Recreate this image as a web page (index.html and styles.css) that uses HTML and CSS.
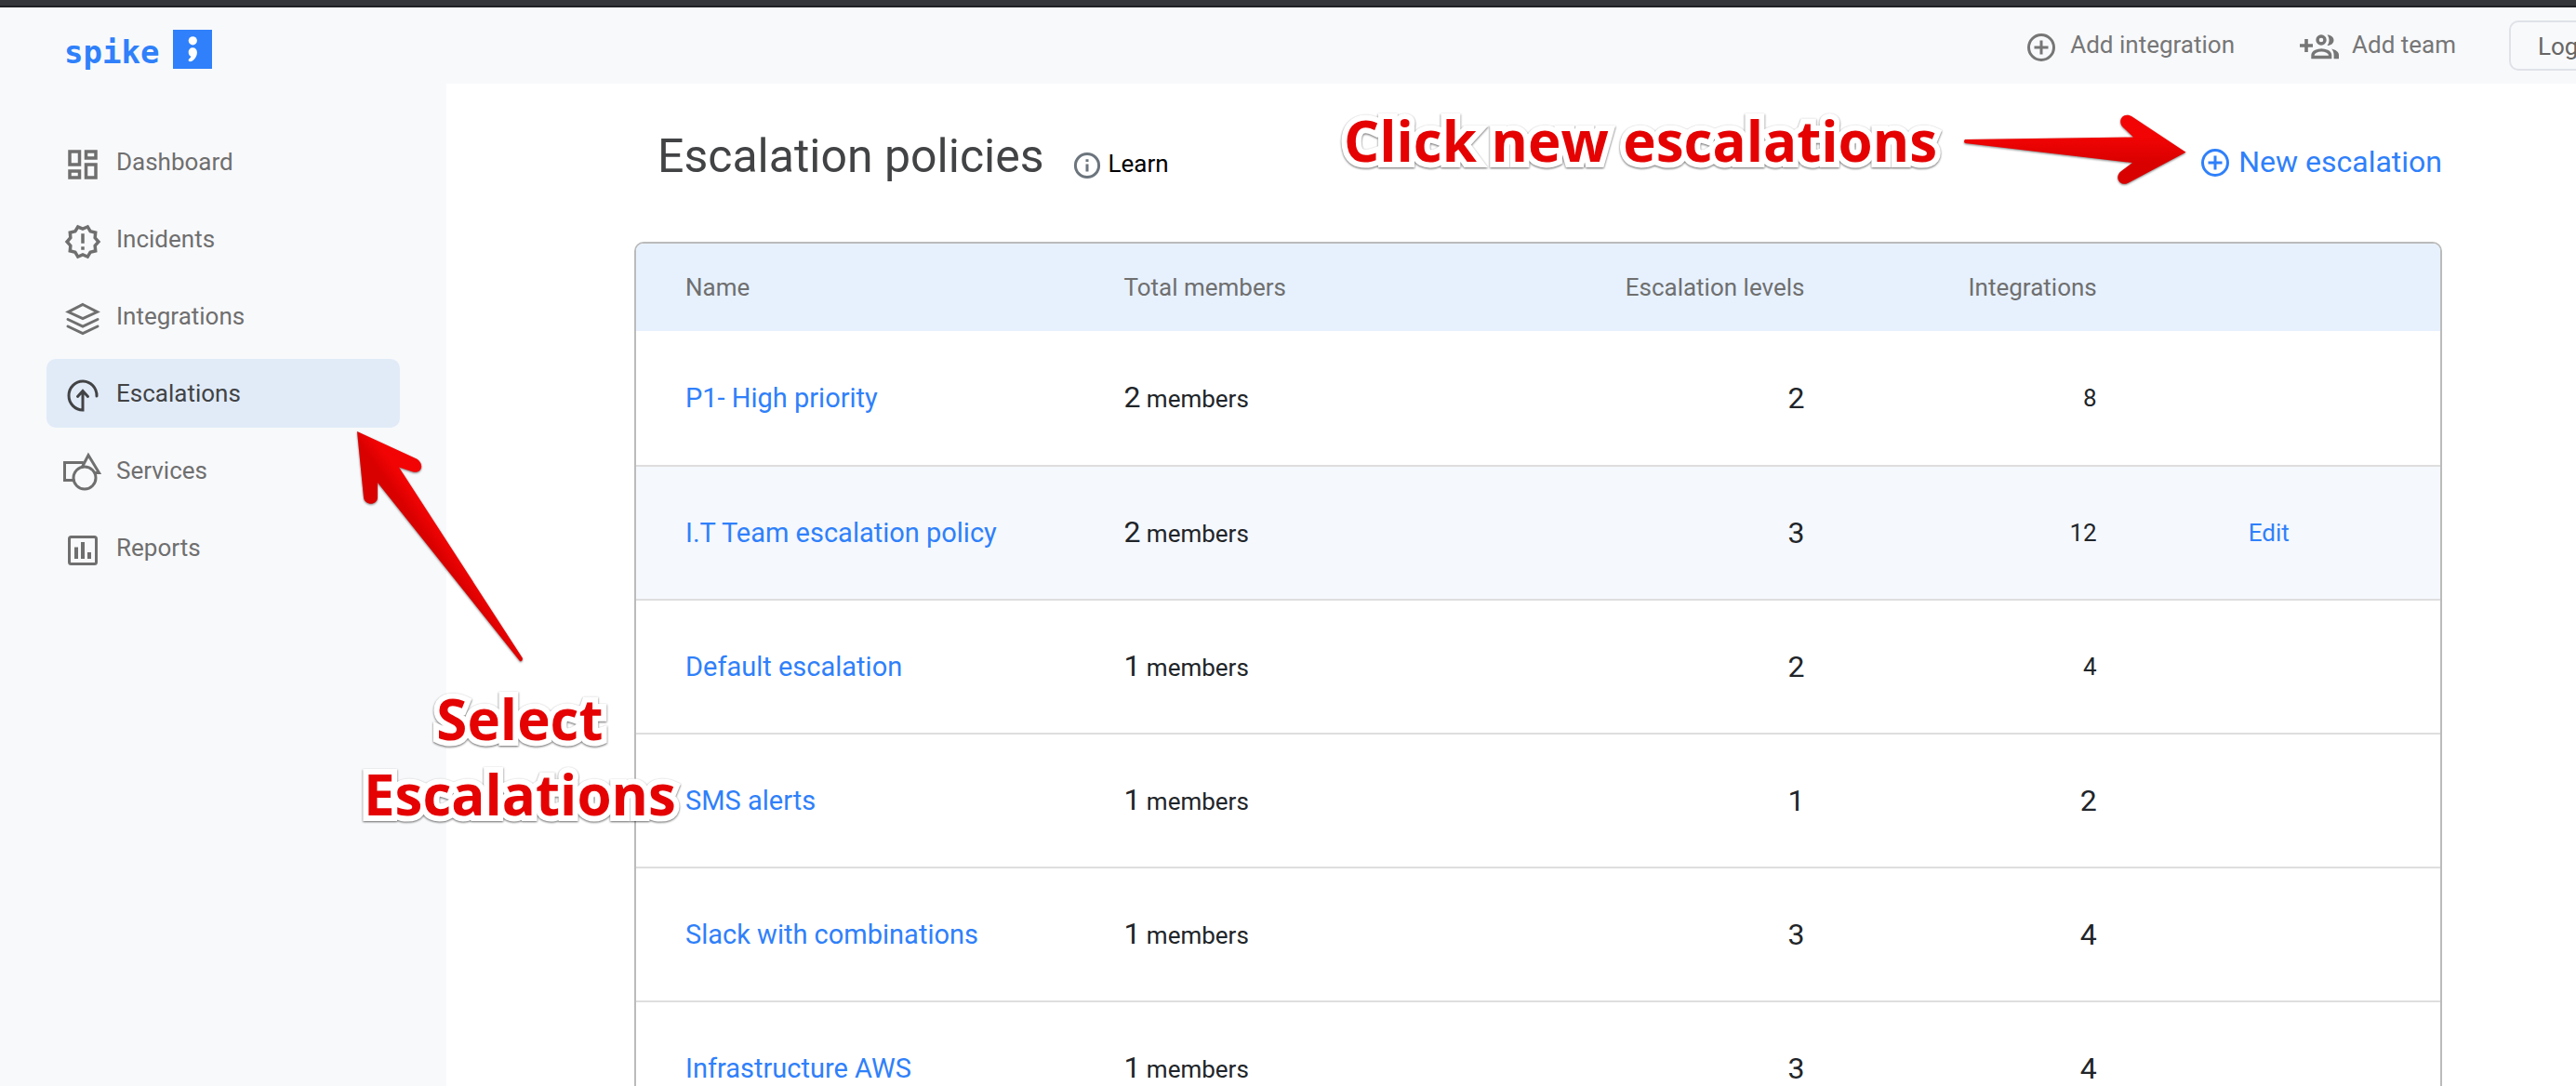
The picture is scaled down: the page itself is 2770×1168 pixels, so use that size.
FILE: index.html
```html
<!DOCTYPE html>
<html lang="en">
<head>
<meta charset="utf-8">
<meta name="viewport" content="width=device-width, initial-scale=1">
<title>Escalation policies</title>
<link rel="stylesheet" href="styles.css">
</head>
<body>
<div class="app">
  <header class="topbar">
    <a class="logo" href="#">
      <span class="logo-text">spike</span>
      <svg class="logo-mark" viewBox="0 0 42 42" aria-hidden="true">
        <rect width="42" height="42" fill="#2f80fa"/>
        <circle cx="21.300" cy="11.800" r="4.600" fill="#fff"/>
        <path d="M21.300 19.200c2.800 0 4.600 2 4.600 5 0 4-2.300 7.500-5.500 9.600-1.600 1-4.600.2-3.600-1.800.6-1.200 2.300-1.800 2.600-3.300-1.800-.7-2.700-2.300-2.700-4.400 0-3 1.800-5.100 4.600-5.100z" fill="#fff"/>
      </svg>
    </a>
    <div class="actions">
      <a class="action" href="#">
        <svg class="icon-circle" viewBox="0 0 30 30" aria-hidden="true"><circle cx="15" cy="15" r="13.500"/><path d="M15 7.500v15M7.500 15h15"/></svg>
        Add integration
      </a>
      <a class="action team" href="#">
        <svg class="icon-team" viewBox="0 0 42 27" aria-hidden="true">
          <path d="M7 5v14M0 12h14" fill="none" stroke="currentColor" stroke-width="3.600"/>
          <circle cx="23" cy="6" r="4" fill="none" stroke="currentColor" stroke-width="3.400"/>
          <path d="M14 24.500v-2.200c0-3.600 5.400-5.400 9.300-5.400s9.300 1.800 9.300 5.400v2.200z" fill="none" stroke="currentColor" stroke-width="3.400"/>
          <path d="M29.500.4c4 0 7 2.500 7 5.800s-3 5.800-7 5.800c1.300-1.600 2-3.600 2-5.800s-.7-4.200-2-5.800zM34 15.600c4.500.8 8 3.400 8 6.500V26.200h-5.400v-4.100c0-2.600-1-4.800-2.600-6.500z" fill="currentColor"/>
        </svg>
        Add team
      </a>
      <button class="log" type="button">Log</button>
    </div>
  </header>
  <div class="body">
    <nav class="sidebar">
      <a class="nav-item" href="#"><svg class="nav-icon" viewBox="0 0 24 24" fill="currentColor" aria-hidden="true"><path d="M19 5v2h-4V5h4M9 5v6H5V5h4m10 8v6h-4v-6h4M9 17v2H5v-2h4M21 3h-8v6h8V3zM11 3H3v10h8V3zm10 8h-8v10h8V11zm-10 4H3v6h8v-6z"/></svg>Dashboard</a>
      <a class="nav-item" href="#"><svg class="nav-icon" viewBox="0 0 24 24" fill="currentColor" aria-hidden="true"><path d="M23 12l-2.440-2.780.340-3.680-3.610-.820-1.890-3.180L12 3 8.600 1.540 6.710 4.720l-3.610.810.340 3.680L1 12l2.440 2.780-.340 3.690 3.610.820 1.890 3.180L12 21l3.400 1.460 1.890-3.180 3.610-.820-.340-3.680L23 12zm-4.510 2.110l.260 2.790-2.740.620-1.430 2.410L12 18.820l-2.580 1.110-1.430-2.410-2.740-.620.260-2.800L3.660 12l1.850-2.120-.260-2.780 2.740-.610 1.430-2.410L12 5.180l2.580-1.110 1.430 2.410 2.740.620-.260 2.790L20.340 12l-1.850 2.110zM11 15h2v2h-2zm0-8h2v6h-2z"/></svg>Incidents</a>
      <a class="nav-item" href="#"><svg class="nav-icon line" viewBox="0 0 42 42" aria-hidden="true"><path d="M21 5.500l15.500 8L21 20.500l-15.500-7zM5 21.500l16 7.500 16-7.500M5 29l16 7.500L37 29"/></svg>Integrations</a>
      <a class="nav-item active" href="#" aria-current="page"><svg class="nav-icon line" viewBox="0 0 42 42" aria-hidden="true"><path d="M36 21A15 15.500 0 1 0 21 36V16M15.500 21.500l5.500-6 5.500 6"/></svg>Escalations</a>
      <a class="nav-item" href="#"><svg class="nav-icon line" viewBox="0 0 42 42" aria-hidden="true"><path d="M11 28.500H1.500v-19H21M20.500 14L27 1.500l11.500 19H35"/><circle cx="23" cy="26" r="12"/></svg>Services</a>
      <a class="nav-item" href="#"><svg class="nav-icon line" viewBox="0 0 42 42" aria-hidden="true"><rect x="6.500" y="6.500" width="29" height="29" rx="2"/><path d="M14 17.500V30M21 12v18M28 23v7" stroke-width="4" stroke-linecap="butt"/></svg>Reports</a>
    </nav>
    <main class="main">
      <div class="title-row">
        <h1>Escalation policies</h1>
        <a class="learn" href="#"><svg class="icon-info" viewBox="0 0 28 28" aria-hidden="true"><circle cx="14" cy="14" r="12.600"/><path d="M14 12.500v8M14 7.300v2.800"/></svg>Learn</a>
        <a class="new" href="#"><svg class="icon-circle" viewBox="0 0 30 30" aria-hidden="true"><circle cx="15" cy="15" r="13.500"/><path d="M15 7.500v15M7.500 15h15"/></svg>New escalation</a>
      </div>
      <div class="card">
        <table class="policies">
          <thead>
            <tr><th class="c-name">Name</th><th class="c-members">Total members</th><th class="c-levels num">Escalation levels</th><th class="c-int num">Integrations</th><th class="c-edit"></th></tr>
          </thead>
          <tbody>
            <tr><td><a href="#">P1- High priority</a></td><td><span class="big">2</span> members</td><td class="num big">2</td><td class="num">8</td><td></td></tr>
            <tr class="hover"><td><a href="#">I.T Team escalation policy</a></td><td><span class="big">2</span> members</td><td class="num big">3</td><td class="num">12</td><td class="edit"><a href="#">Edit</a></td></tr>
            <tr><td><a href="#">Default escalation</a></td><td><span class="big">1</span> members</td><td class="num big">2</td><td class="num">4</td><td></td></tr>
            <tr><td><a href="#">SMS alerts</a></td><td><span class="big">1</span> members</td><td class="num big">1</td><td class="num big">2</td><td></td></tr>
            <tr><td><a href="#">Slack with combinations</a></td><td><span class="big">1</span> members</td><td class="num big">3</td><td class="num big">4</td><td></td></tr>
            <tr><td><a href="#">Infrastructure AWS</a></td><td><span class="big">1</span> members</td><td class="num big">3</td><td class="num big">4</td><td></td></tr>
          </tbody>
        </table>
      </div>
    </main>
  </div>

  <!-- Tutorial callouts laid over the page -->
  <p class="callout callout-new">Click new escalations</p>
  <svg class="arrow arrow-new" viewBox="0 0 240 78" aria-hidden="true">
    <defs><linearGradient id="g1" x1="0" y1="0" x2="0" y2="1"><stop offset=".3" stop-color="#f30404"/><stop offset=".7" stop-color="#d90000"/></linearGradient></defs>
    <path fill="url(#g1)" d="M2 28L183 25.500L172 15C165 8 172-2 181 3L239.500 41.700L177 75C168 79 162 68 170 62L182 53L2 32Q0 30 2 28z"/>
  </svg>
  <p class="callout callout-select">Select<br>Escalations</p>
  <svg class="arrow arrow-select" viewBox="0 0 178 248" aria-hidden="true">
    <defs><linearGradient id="g2" gradientUnits="userSpaceOnUse" x1="38" y1="63" x2="52" y2="53"><stop offset="0" stop-color="#d90000"/><stop offset="1" stop-color="#f30404"/></linearGradient></defs>
    <path fill="url(#g2)" d="M0 0L63 29C73 34 70 46 60 43.500L45 38.500L178 244Q177.500 248 175 247L22 55V71C22 80 8 80 7 71z"/>
  </svg>
</div>
</body>
</html>
```
FILE: styles.css
```css
* { box-sizing: border-box; }

body {
  margin: 0;
  font-family: Roboto, "Liberation Sans", sans-serif;
  font-size: 26px;
  line-height: 36px;
  color: #212529;
  background: #fff;
}

a { color: #2f80fa; text-decoration: none; }
svg { display: block; flex: none; overflow: visible; }

.app {
  position: relative;
  display: flex;
  flex-direction: column;
  height: 100vh;
  overflow: hidden;
}

.topbar {
  flex: none;
  display: flex;
  justify-content: space-between;
  height: 90px;
  border-top: 6px solid #35363a;
  box-shadow: inset 0 2px #202124;
  background: #f8f9fb;
}

.logo {
  display: flex;
  align-items: flex-start;
  gap: 15px;
  padding: 26px 0 0 69px;
}
.logo-text {
  padding-top: 6px;
  font-family: "DejaVu Sans Mono", monospace;
  font-size: 34px;
  font-weight: 700;
}
.logo-mark { width: 42px; height: 42px; }

.actions {
  display: flex;
  align-items: flex-start;
  padding-top: 16px;
  margin-right: -48px;
}
.action {
  display: flex;
  align-items: center;
  gap: 16px;
  height: 54px;
  margin-right: 70px;
  padding-bottom: 2px;
  color: #767676;
}
.team { gap: 14px; margin-right: 57px; }
.icon-circle {
  width: 30px;
  height: 30px;
  margin-top: 6px;
  fill: none;
  stroke: currentColor;
  stroke-width: 3;
}
.icon-team { width: 42px; height: 27px; margin-top: 4px; }
.log {
  width: 120px;
  height: 54px;
  padding: 2px 0 0 29px;
  border: 2px solid #dfe2e8;
  border-radius: 10px;
  background: transparent;
  font: inherit;
  text-align: left;
  color: #666;
}

.body { flex: 1; display: flex; min-height: 0; }

.sidebar {
  flex: none;
  display: flex;
  flex-direction: column;
  gap: 9px;
  width: 480px;
  padding: 47px 50px 0;
  background: #f8f9fb;
}
.nav-item {
  display: flex;
  align-items: center;
  gap: 15px;
  height: 74px;
  padding-left: 18px;
  border-radius: 10px;
  color: #6f6f6f;
}
.active { background: #e1ebf8; color: #424345; }
.nav-icon { width: 42px; height: 42px; margin-top: 6px; }
.line {
  fill: none;
  stroke: currentColor;
  stroke-width: 3;
  stroke-linecap: round;
}

.main { flex: 1; min-width: 0; padding: 42px 144px 0 202px; }

.title-row {
  display: flex;
  align-items: baseline;
  padding-left: 25px;
  margin-bottom: 56px;
}
h1 {
  margin: 0;
  font-size: 50px;
  font-weight: 400;
  line-height: 72px;
  color: #424345;
}
.learn, .new { display: flex; align-items: baseline; }
.learn { gap: 9px; margin-left: 32px; color: #000; }
.icon-info {
  align-self: center;
  width: 28px;
  height: 28px;
  margin-top: 4px;
  fill: none;
  stroke: #6c757d;
  stroke-width: 3;
}
.new { gap: 10px; margin-left: auto; font-size: 32px; }
.new .icon-circle { align-self: center; margin-top: 2px; }

.card {
  border: 2px solid #bbb;
  border-radius: 10px;
  overflow: hidden;
}
.policies { width: 100%; table-layout: fixed; border-collapse: collapse; }
.policies th {
  height: 94px;
  padding: 0 53px;
  background: #e7f1fe;
  font-weight: 400;
  text-align: left;
  color: #6f6f6f;
}
.policies td { height: 144px; padding: 0 53px; white-space: nowrap; }
.policies tbody tr + tr td { box-shadow: inset 0 2px #dedede; padding-top: 2px; }
.policies td:first-child { font-size: 29px; }
.policies .num { text-align: right; }
.policies .big { font-size: 32px; }
.hover { background: #f5f8fd; }
.policies .edit { padding-left: 110px; }
.c-name { width: 24.3%; }
.c-members { width: 22%; }
.c-levels { width: 21.2%; }
.c-int { width: 16.2%; }

.callout {
  position: absolute;
  margin: 0;
  font-family: "Open Sans", "Noto Sans", sans-serif;
  font-size: 60px;
  font-weight: 700;
  line-height: 81px;
  text-align: center;
  white-space: nowrap;
  color: #e50202;
  -webkit-text-stroke: 12px #fff;
  paint-order: stroke fill;
  stroke-linejoin: round;
  filter: drop-shadow(0 1px 1px rgba(0, 0, 0, .6));
}
.callout-new { left: 1445px; top: 111px; }
.callout-select { left: 391px; top: 733px; }
.arrow { position: absolute; filter: drop-shadow(0 1px 1px rgba(0, 0, 0, .5)); }
.arrow-new { left: 2111px; top: 122px; width: 240px; }
.arrow-select { left: 384px; top: 464px; width: 178px; }
```
